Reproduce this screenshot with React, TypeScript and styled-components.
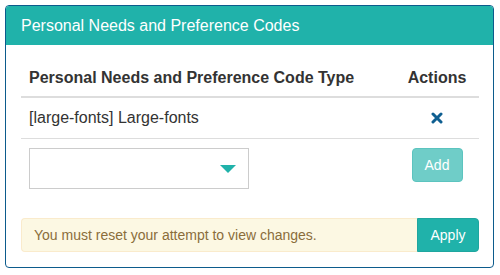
import React from "react";
import styled, { createGlobalStyle } from "styled-components";

const GlobalStyle = createGlobalStyle`
  body {
    margin: 0;
    background: #ffffff;
    font-family: "Liberation Sans", Arial, sans-serif;
    color: #333333;
  }
`;

const Panel = styled.div`
  margin: 5px 0 0 5px;
  width: 489px;
  height: 263px;
  box-sizing: border-box;
  border: 1px solid #0c5b8c;
  border-radius: 4px;
  overflow: hidden;
  display: flex;
  flex-direction: column;
`;

const PanelHeading = styled.div`
  background: #20b2aa;
  color: #ffffff;
  height: 39px;
  padding: 0 15px;
  display: flex;
  align-items: center;
  font-size: 16px;
`;

const PanelBody = styled.div`
  padding: 15px 14px 15px 15px;
  display: flex;
  flex-direction: column;
`;

const Row = styled.div<{ $head?: boolean; $line?: boolean }>`
  display: grid;
  grid-template-columns: 1fr 84px;
  align-items: center;
  min-height: ${(p) => (p.$head ? "36px" : "40px")};
  border-bottom: ${(p) =>
    p.$head ? "2px solid #dddddd" : p.$line ? "1px solid #dddddd" : "none"};
  font-size: 16px;
  font-weight: ${(p) => (p.$head ? "bold" : "normal")};
`;

const Cell = styled.div<{ $center?: boolean }>`
  padding: 0 8px;
  text-align: ${(p) => (p.$center ? "center" : "left")};
  display: flex;
  justify-content: ${(p) => (p.$center ? "center" : "flex-start")};
`;

const EditRow = styled.div`
  display: grid;
  grid-template-columns: 1fr 84px;
  align-items: start;
  padding-top: 9px;
`;

const Select = styled.div`
  margin-left: 8px;
  width: 220px;
  height: 41px;
  box-sizing: border-box;
  border: 1px solid #cccccc;
  display: flex;
  align-items: center;
  justify-content: flex-end;
  padding-right: 12px;
`;

const AddButton = styled.button`
  justify-self: center;
  width: 51px;
  height: 34px;
  border: 1px solid #5cc4bf;
  border-radius: 4px;
  background: #6fcdc8;
  color: #ffffff;
  font-family: "Liberation Sans", Arial, sans-serif;
  font-size: 14px;
  padding: 0;
`;

const AlertGroup = styled.div`
  margin-top: 29px;
  display: flex;
  height: 34px;
`;

const Alert = styled.div`
  flex: 1;
  background: #fcf8e3;
  border: 1px solid #faebcc;
  border-right: none;
  border-radius: 4px 0 0 4px;
  color: #8a6d3b;
  font-size: 14px;
  display: flex;
  align-items: center;
  padding-left: 12px;
`;

const ApplyButton = styled.button`
  width: 62px;
  border: 1px solid #1fa69f;
  border-radius: 0 4px 4px 0;
  background: #20b2aa;
  color: #ffffff;
  font-family: "Liberation Sans", Arial, sans-serif;
  font-size: 14px;
  padding: 0;
`;

const RemoveIcon = () => (
  <svg width="12" height="12" viewBox="0 0 12 12">
    <path
      d="M2 2 L10 10 M10 2 L2 10"
      stroke="#0f5f91"
      strokeWidth="3"
      strokeLinecap="round"
    />
  </svg>
);

const Caret = () => (
  <svg width="16" height="8" viewBox="0 0 16 8">
    <path d="M0 0 H16 L8 8 Z" fill="#20b2aa" />
  </svg>
);

export default function App() {
  return (
    <>
      <GlobalStyle />
      <Panel>
        <PanelHeading>Personal Needs and Preference Codes</PanelHeading>
        <PanelBody>
          <Row $head>
            <Cell>Personal Needs and Preference Code Type</Cell>
            <Cell $center>Actions</Cell>
          </Row>
          <Row $line>
            <Cell>[large-fonts] Large-fonts</Cell>
            <Cell $center>
              <RemoveIcon />
            </Cell>
          </Row>
          <EditRow>
            <Select>
              <Caret />
            </Select>
            <AddButton>Add</AddButton>
          </EditRow>
          <AlertGroup>
            <Alert>You must reset your attempt to view changes.</Alert>
            <ApplyButton>Apply</ApplyButton>
          </AlertGroup>
        </PanelBody>
      </Panel>
    </>
  );
}
